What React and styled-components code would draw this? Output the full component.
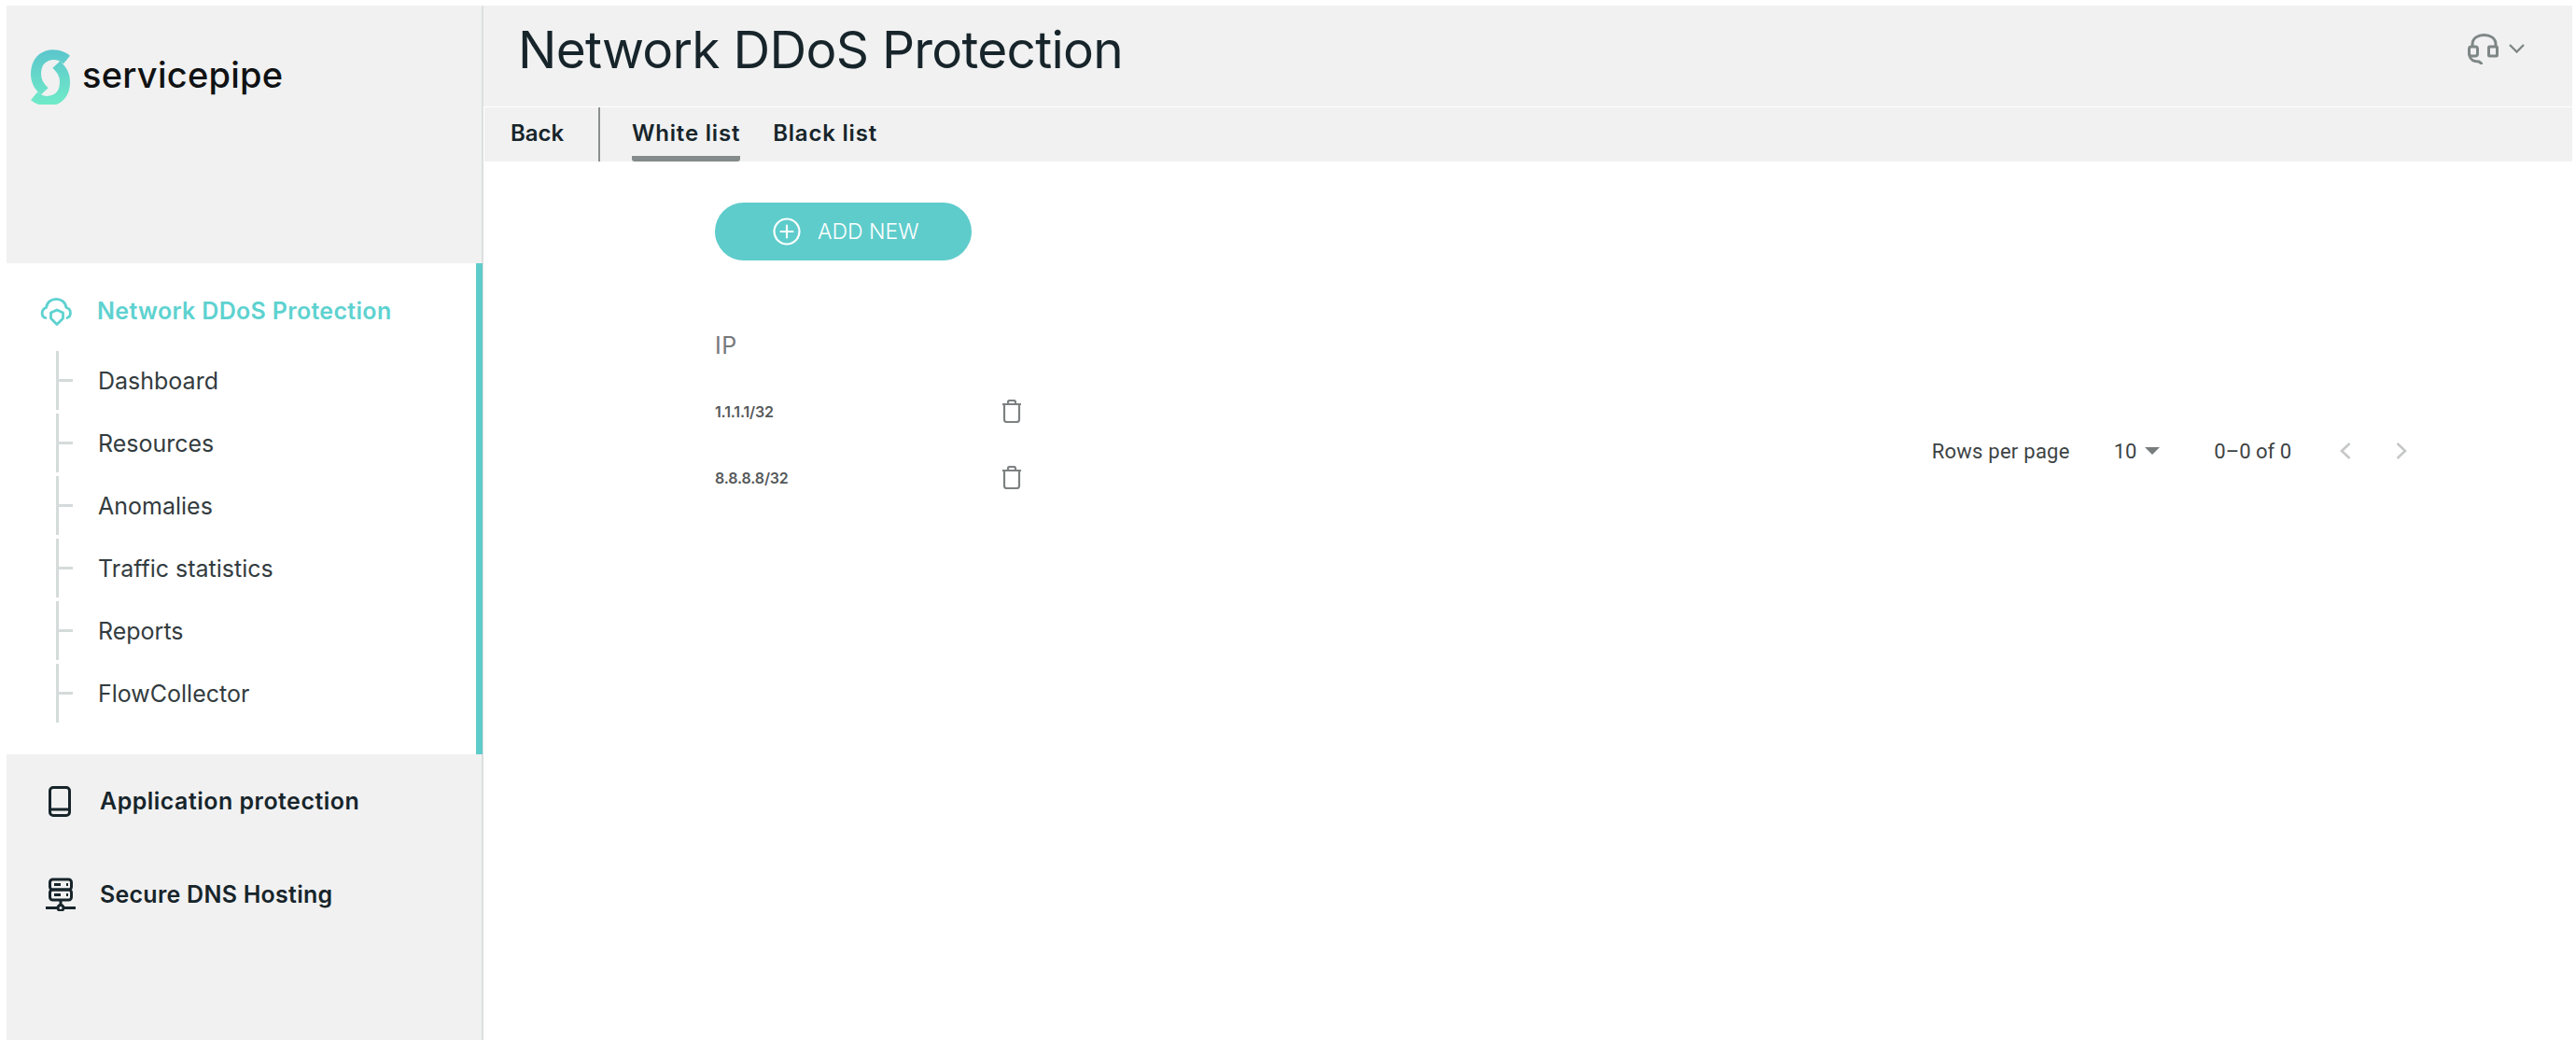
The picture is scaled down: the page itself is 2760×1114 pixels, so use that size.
import React from 'react';
import styled, { createGlobalStyle } from 'styled-components';

const COLORS = {
  panel: '#f1f1f1',
  border: '#dcdfdf',
  teal: '#5ecccb',
  tealText: '#5ed2d0',
  ink: '#17252b',
  subInk: '#333c40',
  icon: '#7f8786',
  rail: '#d5dbda',
};

const SANS = '"Inter", "Noto Sans", sans-serif';

const GlobalStyle = createGlobalStyle`
  html, body {
    margin: 0;
    height: 100%;
    background: #ffffff;
    overflow: hidden;
  }
  body {
    font-family: ${SANS};
  }
  * {
    box-sizing: border-box;
  }
`;

const Page = styled.div`
  display: flex;
  height: 100vh;
  padding: 6px 4px 0 7px;
`;

const Sidebar = styled.aside`
  flex: 0 0 511px;
  display: flex;
  flex-direction: column;
  background: ${COLORS.panel};
  border-right: 2px solid ${COLORS.border};
`;

const LogoBlock = styled.div`
  height: 276px;
  display: flex;
  align-items: flex-start;
  gap: 12px;
  padding: 47px 0 0 25px;
`;

const Wordmark = styled.span`
  font-size: 38px;
  font-weight: 500;
  line-height: 46px;
  letter-spacing: 0.25px;
  color: #101214;
  margin-top: 4px;
`;

const ActiveGroup = styled.section`
  height: 526px;
  margin-right: -1px;
  padding: 26px 0 0 37px;
  background: #ffffff;
  border-right: 7px solid ${COLORS.teal};
`;

const GroupHeader = styled.div`
  display: flex;
  align-items: center;
  gap: 27px;
  height: 50px;
  margin-left: -1px;
  font-size: 25px;
  font-weight: 600;
  letter-spacing: 0.32px;
  color: ${COLORS.tealText};
`;

const SubList = styled.ul`
  list-style: none;
  margin: 16px 0 0 16px;
  padding: 0;
`;

const SubItem = styled.li`
  display: flex;
  align-items: center;
  gap: 27px;
  height: 67px;
  font-size: 25px;
  font-weight: 400;
  letter-spacing: 0;
  color: ${COLORS.subInk};
`;

const Connector = styled.span`
  flex: 0 0 18px;
  height: 63px;
  border-left: 3px solid ${COLORS.rail};
  background: linear-gradient(${COLORS.rail}, ${COLORS.rail}) left center / 100% 3px no-repeat;
`;

const NavRow = styled.div`
  display: flex;
  align-items: center;
  gap: 23px;
  height: 100px;
  padding-left: 37px;
  font-size: 25px;
  font-weight: 600;
  letter-spacing: ${(p) => p.$tracking || '0.47px'};
  color: ${COLORS.ink};
`;

const NavIcon = styled.span`
  flex: 0 0 40px;
  display: flex;
  justify-content: center;
`;

const Main = styled.main`
  flex: 1;
  min-width: 0;
  display: flex;
  flex-direction: column;
`;

const TopBar = styled.header`
  height: 108px;
  display: flex;
  justify-content: space-between;
  align-items: flex-start;
  background: ${COLORS.panel};
  padding: 17px 51px 0 37px;
`;

const Title = styled.h1`
  margin: 0;
  font-size: 55px;
  font-weight: 400;
  line-height: 60px;
  letter-spacing: -0.75px;
  color: ${COLORS.ink};
`;

const SupportButton = styled.div`
  display: flex;
  align-items: center;
  gap: 11px;
  margin-top: 12px;
`;

const TabBar = styled.nav`
  height: 58px;
  margin: 1px 0 0 1px;
  display: flex;
  align-items: stretch;
  background: ${COLORS.panel};
`;

const BackLink = styled.div`
  display: flex;
  align-items: center;
  width: 124px;
  padding: 0 0 3px 28px;
  border-right: 2px solid #8b8f8f;
  font-size: 24px;
  font-weight: 600;
  color: ${COLORS.ink};
`;

const Tabs = styled.div`
  display: flex;
  gap: 35px;
  padding-left: 34px;
`;

const Tab = styled.div`
  display: flex;
  align-items: center;
  padding-top: 2px;
  font-size: 24px;
  font-weight: 600;
  letter-spacing: 0.8px;
  color: ${COLORS.ink};
  border-bottom: 6px solid ${(p) => (p.$active ? '#848b8a' : 'transparent')};
  border-radius: 0 0 3px 3px;
`;

const Content = styled.div`
  padding: 44px 0 0 248px;
`;

const AddButton = styled.div`
  width: 275px;
  height: 62px;
  display: flex;
  align-items: center;
  gap: 18px;
  padding-left: 62px;
  border-radius: 31px;
  background: ${COLORS.teal};
  color: #ffffff;
  font-size: 23px;
  font-weight: 300;
`;

const ListRow = styled.div`
  display: flex;
  justify-content: space-between;
  margin-top: 55px;
`;

const Table = styled.div`
  flex: 0 0 329px;
`;

const HeadCell = styled.div`
  height: 71px;
  display: flex;
  align-items: center;
  font-size: 25px;
  font-weight: 400;
  letter-spacing: 0.5px;
  color: #77797b;
`;

const DataRow = styled.div`
  height: 71px;
  display: flex;
  align-items: center;
  justify-content: space-between;
  font-size: 16px;
  font-weight: 600;
  letter-spacing: -0.15px;
  color: #55595a;
`;

const Pagination = styled.div`
  align-self: flex-end;
  height: 128px;
  display: flex;
  align-items: center;
  padding-right: 177px;
  font-family: "Roboto", sans-serif;
  font-size: 22px;
  color: #3d4344;
`;

const RowsLabel = styled.span`
  letter-spacing: 0.25px;
`;

const RowsSelect = styled.div`
  display: flex;
  align-items: center;
  gap: 9px;
  margin-left: 47px;
`;

const Caret = styled.span`
  width: 0;
  height: 0;
  border-left: 8px solid transparent;
  border-right: 8px solid transparent;
  border-top: 8px solid #777c7c;
`;

const RangeLabel = styled.span`
  margin-left: 58px;
`;

const PagerButtons = styled.div`
  display: flex;
  gap: 48px;
  margin-left: 52px;
`;

const LogoMark = () => (
  <svg width="44" height="59" viewBox="12 11 44 59" fill="none" style={{ flex: 'none' }}>
    <defs>
      <linearGradient id="logoFill" x1="0" y1="12" x2="0" y2="70" gradientUnits="userSpaceOnUse">
        <stop offset="0" stopColor="#5cc6cc" />
        <stop offset="1" stopColor="#70ebc8" />
      </linearGradient>
    </defs>
    <path d="M51.500 22C40 12.500 18.500 15 18.500 37C18.500 46 22 50 27.500 56" stroke="url(#logoFill)" strokeWidth="11" />
    <path d="M16.500 61C28 70.500 49.500 68 49.500 46C49.500 37 46 33 40.500 27" stroke="url(#logoFill)" strokeWidth="11" />
  </svg>
);

const CloudShieldIcon = () => (
  <svg width="34" height="31" viewBox="14 11 34 31" fill="none" stroke={COLORS.tealText} strokeWidth="2.800" strokeLinecap="round" strokeLinejoin="round" style={{ flex: 'none' }}>
    <path d="M20 33.500C15 32.500 14.500 24.500 20.500 22.500C22 10.500 40.500 10 42 22.500C48 24 47.500 32 43 33.500" />
    <path d="M25.500 28L32 25L38.500 28V34L32 40.500L25.500 34Z" />
  </svg>
);

const PhoneIcon = () => (
  <svg width="24" height="33" viewBox="0 0 24 33" fill="none" stroke={COLORS.ink} strokeWidth="3" strokeLinejoin="round">
    <rect x="1.500" y="1.500" width="21" height="30" rx="3.500" />
    <path d="M1.500 25H22.500" />
  </svg>
);

const ServerIcon = () => (
  <svg width="33" height="36" viewBox="11 9 33 36" fill="none" stroke={COLORS.ink} strokeWidth="3">
    <rect x="16.500" y="11" width="23" height="11" rx="3" />
    <rect x="16.500" y="22" width="23" height="11" rx="3" />
    <path d="M21 16.500H28M34 16.500H36M21 27.500H28M34 27.500H36" />
    <path d="M28 33V38M12 41.500H24.500M31.500 41.500H44" />
    <circle cx="28" cy="41.500" r="3" />
  </svg>
);

const HeadsetIcon = () => (
  <svg width="33" height="34" viewBox="0 0 33 34" fill="none" stroke={COLORS.icon} strokeWidth="3" strokeLinejoin="round">
    <path d="M5 15V12.500C5 -1 30 -1 30 12.500V15" />
    <rect x="1.500" y="15" width="9" height="10" rx="2.500" />
    <rect x="22.500" y="15" width="9" height="10" rx="1" />
    <path d="M2 25C3 29 7 31 12 31L14.500 33" strokeLinecap="round" />
  </svg>
);

const ChevronDown = () => (
  <svg width="17" height="10" viewBox="0 0 17 10" fill="none" stroke={COLORS.icon} strokeWidth="2.400">
    <path d="M1 1L8.500 8.500L16 1" />
  </svg>
);

const PlusCircleIcon = () => (
  <svg width="30" height="30" viewBox="0 0 30 30" fill="none" stroke="#ffffff" strokeWidth="2.200" strokeLinecap="round" style={{ flex: 'none' }}>
    <circle cx="15" cy="15" r="13.500" />
    <path d="M15 8.500V21.500M8.500 15H21.500" />
  </svg>
);

const TrashIcon = () => (
  <svg width="22" height="25" viewBox="0 0 22 25" fill="none" stroke="#7d8182" strokeWidth="2.200" strokeLinejoin="round">
    <path d="M1 5H21M7 5V2.500C7 1.500 8 1 9 1H13C14 1 15 1.500 15 2.500V5" />
    <path d="M3 5V21.500C3 23 4 24 5.500 24H16.500C18 24 19 23 19 21.500V5" />
  </svg>
);

const PagerArrow = ({ flip }) => (
  <svg width="12" height="18" viewBox="0 0 12 18" fill="none" stroke="#c6c8c8" strokeWidth="2.600" style={flip ? { transform: 'scaleX(-1)' } : undefined}>
    <path d="M10.500 1L2 9L10.500 17" />
  </svg>
);

const SUB_ITEMS = ['Dashboard', 'Resources', 'Anomalies', 'Traffic statistics', 'Reports', 'FlowCollector'];
const IPS = ['1.1.1.1/32', '8.8.8.8/32'];

export default function App() {
  return (
    <>
      <GlobalStyle />
      <Page>
        <Sidebar>
          <LogoBlock>
            <LogoMark />
            <Wordmark>servicepipe</Wordmark>
          </LogoBlock>
          <ActiveGroup>
            <GroupHeader>
              <CloudShieldIcon />
              Network DDoS Protection
            </GroupHeader>
            <SubList>
              {SUB_ITEMS.map((item) => (
                <SubItem key={item}>
                  <Connector />
                  {item}
                </SubItem>
              ))}
            </SubList>
          </ActiveGroup>
          <NavRow>
            <NavIcon>
              <PhoneIcon />
            </NavIcon>
            Application protection
          </NavRow>
          <NavRow $tracking="0.25px">
            <NavIcon>
              <ServerIcon />
            </NavIcon>
            Secure DNS Hosting
          </NavRow>
        </Sidebar>
        <Main>
          <TopBar>
            <Title>Network DDoS Protection</Title>
            <SupportButton>
              <HeadsetIcon />
              <ChevronDown />
            </SupportButton>
          </TopBar>
          <TabBar>
            <BackLink>Back</BackLink>
            <Tabs>
              <Tab $active>White list</Tab>
              <Tab>Black list</Tab>
            </Tabs>
          </TabBar>
          <Content>
            <AddButton>
              <PlusCircleIcon />
              ADD NEW
            </AddButton>
            <ListRow>
              <Table>
                <HeadCell>IP</HeadCell>
                {IPS.map((ip) => (
                  <DataRow key={ip}>
                    {ip}
                    <TrashIcon />
                  </DataRow>
                ))}
              </Table>
              <Pagination>
                <RowsLabel>Rows per page</RowsLabel>
                <RowsSelect>
                  10
                  <Caret />
                </RowsSelect>
                <RangeLabel>0–0 of 0</RangeLabel>
                <PagerButtons>
                  <PagerArrow />
                  <PagerArrow flip />
                </PagerButtons>
              </Pagination>
            </ListRow>
          </Content>
        </Main>
      </Page>
    </>
  );
}
